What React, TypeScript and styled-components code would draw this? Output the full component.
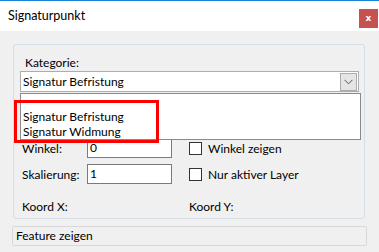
import React from "react";
import styled, { createGlobalStyle } from "styled-components";

const GlobalStyle = createGlobalStyle`
  html, body {
    margin: 0;
    padding: 0;
    background: #f0f0f0;
    font-family: Lato, "Noto Sans", "Liberation Sans", sans-serif;
    font-size: 12px;
    color: #000;
  }
`;

const Window = styled.div`
  width: 379px;
  height: 252px;
  border-top: 1px solid #1883d7;
  box-sizing: border-box;
  background: #f0f0f0;
  overflow: hidden;
`;

const TitleBar = styled.div`
  height: 30px;
  background: #fff;
  display: flex;
  align-items: center;
  justify-content: space-between;
  padding: 0 1px 0 8px;
`;

const Title = styled.span`
  font-size: 12.5px;
  margin-top: -2px;
`;

const CloseButton = styled.button`
  width: 19px;
  height: 19px;
  margin-top: 4px;
  border: 0;
  padding: 0;
  background: #c75050;
  color: #fff;
  font-family: "DejaVu Sans", sans-serif;
  font-weight: bold;
  font-size: 9px;
  line-height: 19px;
`;

const Body = styled.div`
  padding: 13px 12px 0 13px;
  display: flex;
  flex-direction: column;
  gap: 7px;
`;

const GroupBox = styled.div`
  position: relative;
  width: 352px;
  height: 175px;
  box-sizing: border-box;
  border: 1px solid #d5dde5;
  border-radius: 3px;
  padding: 9px 0 0 6px;
`;

const FieldLabel = styled.div`
  height: 17px;
  line-height: 17px;
  margin-left: 5px;
`;

const ComboWrap = styled.div`
  position: relative;
  width: 339px;
  height: 21px;
  box-sizing: border-box;
  border: 1px solid #adadad;
  background: #fff;
  display: flex;
  align-items: center;
  padding-left: 2px;
`;

const ArrowButton = styled.div`
  position: absolute;
  right: 1px;
  top: 1px;
  width: 17px;
  height: 18px;
  box-sizing: border-box;
  border: 1px solid #acacac;
  background: #e5e5e5;
  display: flex;
  align-items: center;
  justify-content: center;
`;

const DropList = styled.ul`
  position: absolute;
  left: -1px;
  top: 21px;
  width: 341px;
  margin: 0;
  padding: 0;
  list-style: none;
  box-sizing: border-box;
  border: 1px solid #8a8a8a;
  background: #fff;
  z-index: 2;
`;

const DropItem = styled.li`
  height: 15px;
  line-height: 15px;
  padding-left: 2px;
`;

const Highlight = styled.div`
  position: absolute;
  left: 0;
  top: 55px;
  width: 145px;
  height: 43px;
  box-sizing: border-box;
  border: 3px solid #ff0000;
  z-index: 3;
`;

const Rows = styled.div`
  margin-top: 46px;
  margin-left: 2px;
  display: flex;
  flex-direction: column;
  gap: 6px;
`;

const Row = styled.div`
  display: flex;
  align-items: center;
  height: 20px;
`;

const LeftCell = styled.div`
  width: 167px;
  display: flex;
  align-items: center;
`;

const RowLabel = styled.span`
  width: 65px;
`;

const TextInput = styled.div`
  width: 85px;
  height: 20px;
  box-sizing: border-box;
  border: 1px solid #7a7a7a;
  background: #fff;
  padding-left: 2px;
  line-height: 18px;
`;

const CheckBox = styled.span`
  width: 13px;
  height: 13px;
  box-sizing: border-box;
  border: 1px solid #333;
  background: #fff;
  margin-right: 6px;
`;

const CoordRow = styled.div`
  display: flex;
  margin-top: 15px;
  margin-left: 2px;
  line-height: 16px;
`;

const FeatureField = styled.div`
  width: 355px;
  height: 20px;
  margin-left: -1px;
  box-sizing: border-box;
  border: 1px solid #d9d9d9;
  border-radius: 2px;
  padding-left: 3px;
  line-height: 18px;
`;

const Chevron = () => (
  <svg width="9" height="6" viewBox="0 0 9 6">
    <path d="M0.5 0.8 L4.5 4.8 L8.5 0.8" fill="none" stroke="#555" strokeWidth="1" />
  </svg>
);

export default function App() {
  const items = ["", "Signatur Befristung", "Signatur Widmung"];
  return (
    <>
      <GlobalStyle />
      <Window>
        <TitleBar>
          <Title>Signaturpunkt</Title>
          <CloseButton>x</CloseButton>
        </TitleBar>
        <Body>
          <GroupBox>
            <FieldLabel>Kategorie:</FieldLabel>
            <ComboWrap>
              Signatur Befristung
              <ArrowButton>
                <Chevron />
              </ArrowButton>
              <DropList>
                {items.map((item, i) => (
                  <DropItem key={i}>{item}</DropItem>
                ))}
              </DropList>
            </ComboWrap>
            <Highlight />
            <Rows>
              <Row>
                <LeftCell>
                  <RowLabel>Winkel:</RowLabel>
                  <TextInput>0</TextInput>
                </LeftCell>
                <CheckBox />
                Winkel zeigen
              </Row>
              <Row>
                <LeftCell>
                  <RowLabel>Skalierung:</RowLabel>
                  <TextInput>1</TextInput>
                </LeftCell>
                <CheckBox />
                Nur aktiver Layer
              </Row>
            </Rows>
            <CoordRow>
              <LeftCell>Koord X:</LeftCell>
              <span>Koord Y:</span>
            </CoordRow>
          </GroupBox>
          <FeatureField>Feature zeigen</FeatureField>
        </Body>
      </Window>
    </>
  );
}
